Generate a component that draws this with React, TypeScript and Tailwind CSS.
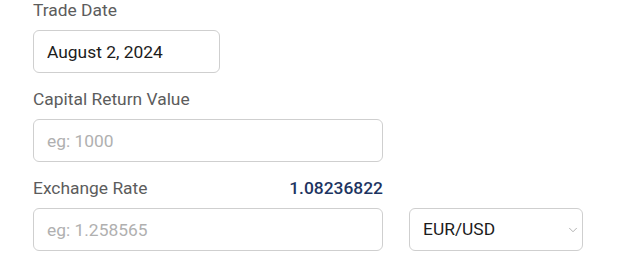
import { ChevronDown } from "lucide-react";

const font = { fontFamily: "Roboto, 'Liberation Sans', sans-serif" };

function Label({ children }: { children: React.ReactNode }) {
  return <div className="h-[22px] leading-[20px] text-[17.4px] text-[#5c5c5c] mb-[8px]">{children}</div>;
}

export default function App() {
  return (
    <div className="bg-white w-[620px] h-[255px] overflow-hidden pl-[33px]" style={font}>
      <Label>Trade Date</Label>
      <input
        readOnly
        value="August 2, 2024"
        className="w-[187px] h-[43px] border border-[#cfcfcf] rounded-[6px] px-[13px] text-[17.4px] text-[#1c1c1c] outline-none"
      />

      <div className="mt-[16px]">
        <Label>Capital Return Value</Label>
        <input
          placeholder="eg: 1000"
          className="w-[350px] h-[43px] border border-[#cfcfcf] rounded-[6px] px-[13px] text-[17.4px] placeholder:text-[#b0b0b0] outline-none"
        />
      </div>

      <div className="mt-[16px]">
        <div className="w-[350px] flex justify-between items-center">
          <Label>Exchange Rate</Label>
          <div className="h-[22px] leading-[20px] mb-[8px] text-[17.4px] font-medium text-[#1d3461]">1.08236822</div>
        </div>
        <div className="flex gap-[26px]">
          <input
            placeholder="eg: 1.258565"
            className="w-[350px] h-[43px] border border-[#cfcfcf] rounded-[6px] px-[13px] text-[17.4px] placeholder:text-[#b0b0b0] outline-none"
          />
          <div className="w-[174px] h-[43px] border border-[#cfcfcf] rounded-[6px] pl-[13px] pr-[2px] flex items-center justify-between">
            <span className="text-[17.4px] text-[#1c1c1c]">EUR/USD</span>
            <ChevronDown className="w-[14px] h-[14px] text-[#9a9a9a]" strokeWidth={1.3} />
          </div>
        </div>
      </div>
    </div>
  );
}
